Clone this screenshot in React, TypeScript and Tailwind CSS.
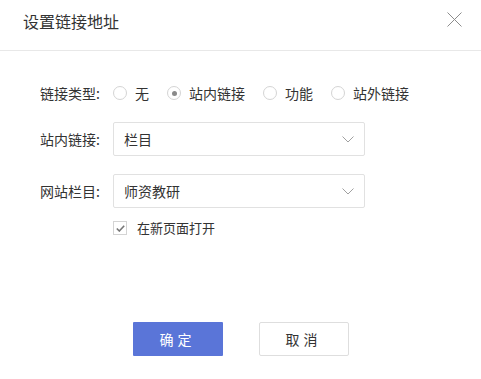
import React, { useState } from 'react';

const font = { fontFamily: '"Noto Sans CJK SC", "Liberation Sans", sans-serif' };

function Chevron() {
  return (
    <svg width="12" height="7" viewBox="0 0 12 7" className="text-[#a0a0a0]">
      <polyline points="0.5,0.5 6,6 11.5,0.5" fill="none" stroke="currentColor" strokeWidth="1" />
    </svg>
  );
}

function Radio({ label, checked, onClick }: { label: string; checked: boolean; onClick: () => void }) {
  return (
    <button type="button" onClick={onClick} className="flex items-center mr-[18px] text-[14px] text-[#333]">
      <span className="w-[14px] h-[14px] rounded-full border border-[#d4d4d4] flex items-center justify-center">
        {checked && <span className="w-[5px] h-[5px] rounded-full bg-[#8a8a8a]" />}
      </span>
      <span className="ml-[8px] leading-5">{label}</span>
    </button>
  );
}

function Select({ value }: { value: string }) {
  return (
    <div className="w-[252px] h-[34px] border border-[#e1e1e1] rounded-[2px] flex items-center justify-between pl-[10px] pr-[10px] text-[14px] text-[#333]">
      <span>{value}</span>
      <Chevron />
    </div>
  );
}

export default function App() {
  const [type, setType] = useState('站内链接');
  const [newPage, setNewPage] = useState(true);
  const types = ['无', '站内链接', '功能', '站外链接'];

  return (
    <div className="w-[481px] h-[379px] bg-white" style={font}>
      {/* header */}
      <div className="h-[51px] border-b border-[#e8e8e8] flex items-start justify-between pl-[23px] pr-[19px] pt-[12px]">
        <h1 className="text-[16px] leading-[18px] text-[#333]">设置链接地址</h1>
        <svg width="15" height="15" viewBox="0 0 15 15" className="text-[#8c8c8c]">
          <path d="M0.5 0.5L14.5 14.5M14.5 0.5L0.5 14.5" stroke="currentColor" strokeWidth="1" />
        </svg>
      </div>

      {/* form */}
      <div className="pl-[40px] pt-[32px]">
        <div className="flex items-center h-5">
          <span className="w-[73px] text-[14px] text-[#333]">链接类型:</span>
          {types.map((t) => (
            <Radio key={t} label={t} checked={type === t} onClick={() => setType(t)} />
          ))}
        </div>

        <div className="flex items-center mt-[19px]">
          <span className="w-[73px] text-[14px] text-[#333]">站内链接:</span>
          <Select value="栏目" />
        </div>

        <div className="flex items-center mt-[18px]">
          <span className="w-[73px] text-[14px] text-[#333]">网站栏目:</span>
          <Select value="师资教研" />
        </div>

        <button
          type="button"
          onClick={() => setNewPage(!newPage)}
          className="flex items-center mt-[13px] ml-[73px] h-[14px]"
        >
          <span className="w-[14px] h-[14px] border border-[#d4d4d4] flex items-center justify-center">
            {newPage && (
              <svg width="9" height="7" viewBox="0 0 9 7" className="text-[#777]">
                <polyline points="0.8,3.5 3.3,6 8.2,0.8" fill="none" stroke="currentColor" strokeWidth="1.6" />
              </svg>
            )}
          </span>
          <span className="ml-[10px] text-[13px] text-[#333]">在新页面打开</span>
        </button>
      </div>

      {/* footer */}
      <div className="flex justify-center gap-[36px] mt-[87px]">
        <button type="button" className="w-[90px] h-[34px] bg-[#5a75d8] text-white text-[14px] tracking-[4px] rounded-[1px]">
          确定
        </button>
        <button type="button" className="w-[90px] h-[34px] border border-[#dedede] bg-white text-[#333] text-[14px] tracking-[4px] rounded-[2px]">
          取消
        </button>
      </div>
    </div>
  );
}
